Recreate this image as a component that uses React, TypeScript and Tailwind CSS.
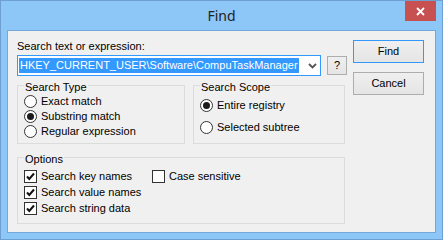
import React from "react";

function Radio({ checked, label }: { checked?: boolean; label: string }) {
  return (
    <div className="flex items-center h-[15px] gap-[4px]">
      <span className="w-[13px] h-[13px] rounded-full border border-[#333333] bg-white flex items-center justify-center">
        {checked && <span className="w-[7px] h-[7px] rounded-full bg-[#1b1b1b]" />}
      </span>
      <span>{label}</span>
    </div>
  );
}

function Check({ checked, label }: { checked?: boolean; label: string }) {
  return (
    <div className="flex items-center h-[16px] gap-[4px]">
      <span className="w-[13px] h-[13px] border border-[#333333] bg-white flex items-center justify-center">
        {checked && (
          <svg width="11" height="11" viewBox="0 0 11 11">
            <polyline points="2,5.5 4.3,8 9,2.5" fill="none" stroke="#111" strokeWidth="2" />
          </svg>
        )}
      </span>
      <span>{label}</span>
    </div>
  );
}

function Btn({ label, def }: { label: string; def?: boolean }) {
  return (
    <div
      className={
        "w-[71px] h-[23px] flex items-center justify-center border bg-linear-to-b from-[#efefef] to-[#e5e5e5] " +
        (def ? "border-[#3399ff]" : "border-[#adadad]")
      }
    >
      {label}
    </div>
  );
}

export default function App() {
  return (
    <div
      className="w-[443px] h-[240px] bg-[#8cc7f7] border border-[#6d9fd0] flex flex-col relative text-[11px] leading-[13px] text-black"
      style={{ fontFamily: '"Liberation Sans", Arial, sans-serif' }}
    >
      <div
        className="h-[29px] leading-[29px] text-center text-[14px] text-[#222222]"
        style={{ fontFamily: '"Noto Sans", "Open Sans", sans-serif' }}
      >
        Find
      </div>
      <div className="absolute top-0 right-[6px] w-[31px] h-[20px] bg-[#c75050] flex items-center justify-center">
        <svg width="9" height="9" viewBox="0 0 9 9">
          <path d="M1 1 L8 8 M8 1 L1 8" stroke="white" strokeWidth="1.8" />
        </svg>
      </div>
      <div className="mx-[6px] h-[203px] border border-[#74a8db] bg-[#f0f0f0] flex pl-[9px] pt-[9px] pr-[11px]">
        <div className="w-[330px] flex flex-col">
          <div className="h-[13px]">Search text or expression:</div>
          <div className="mt-[2px] flex items-center gap-[6px]">
            <div className="w-[304px] h-[21px] border border-[#3399ff] bg-white flex items-center pl-[1px] pr-[3px]">
              <span className="bg-[#3399ff] text-white h-[15px] leading-[15px] pl-[1px] pr-[1px]">
                HKEY_CURRENT_USER\Software\CompuTaskManager
              </span>
              <div className="flex-1" />
              <svg width="9" height="6" viewBox="0 0 9 6">
                <polyline points="1,1 4.5,4.5 8,1" fill="none" stroke="#555555" strokeWidth="1.8" />
              </svg>
            </div>
            <div className="w-[20px] h-[19px] border border-[#adadad] bg-linear-to-b from-[#efefef] to-[#e5e5e5] flex items-center justify-center">
              ?
            </div>
          </div>
          <div className="mt-[1px] flex gap-[8px]">
            <fieldset className="w-[168px] border border-[#dcdcdc] px-[6px] pb-[4px] min-w-0">
              <legend className="px-[1px] pt-[4px] leading-[13px]">Search Type</legend>
              <div className="flex flex-col">
                <Radio label="Exact match" />
                <Radio checked label="Substring match" />
                <Radio label="Regular expression" />
              </div>
            </fieldset>
            <fieldset className="w-[152px] border border-[#dcdcdc] px-[6px] pb-[4px] min-w-0">
              <legend className="px-[1px] pt-[4px] leading-[13px]">Search Scope</legend>
              <div className="flex flex-col pt-[4px] gap-[7px]">
                <Radio checked label="Entire registry" />
                <Radio label="Selected subtree" />
              </div>
            </fieldset>
          </div>
          <fieldset className="mt-[5px] w-[328px] border border-[#dcdcdc] px-[6px] pb-[7px] min-w-0">
            <legend className="px-[1px] pt-[4px] leading-[13px]">Options</legend>
            <div className="pt-[2px] grid grid-cols-[128px_auto]">
              <div className="flex flex-col">
                <Check checked label="Search key names" />
                <Check checked label="Search value names" />
                <Check checked label="Search string data" />
              </div>
              <div className="flex flex-col">
                <Check label="Case sensitive" />
              </div>
            </div>
          </fieldset>
        </div>
        <div className="ml-[6px] flex flex-col gap-[9px]">
          <Btn label="Find" def />
          <Btn label="Cancel" />
        </div>
      </div>
    </div>
  );
}
